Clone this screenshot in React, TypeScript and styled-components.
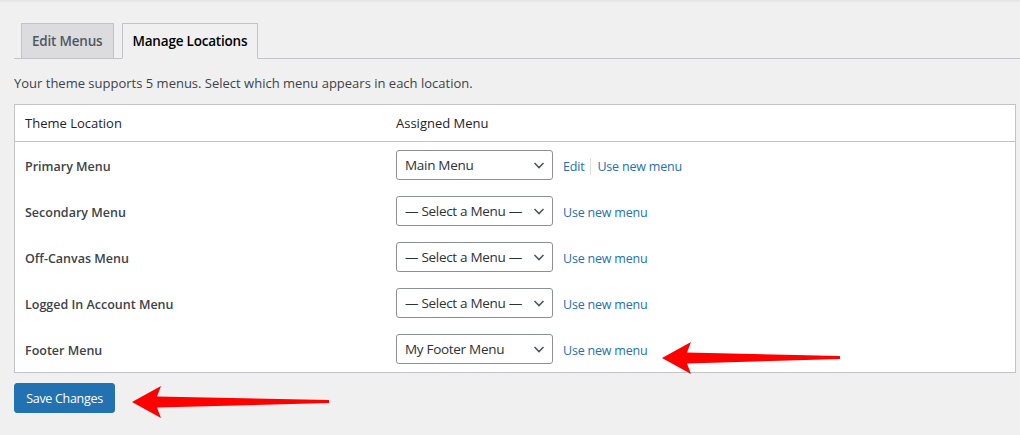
import styled, { createGlobalStyle } from "styled-components";

const GlobalStyle = createGlobalStyle`
  html, body {
    margin: 0;
    padding: 0;
    background: #f0f0f1;
    font-family: "Open Sans", "Noto Sans", sans-serif;
    color: #3c434a;
  }
`;

const Page = styled.div`
  position: relative;
  width: 1020px;
  height: 435px;
  overflow: hidden;
  background: #f0f0f1;
`;

const TopShadow = styled.div`
  height: 3px;
  background: linear-gradient(#e2e2e3, #f0f0f1);
`;

const Wrap = styled.div`
  padding: 20px 0 0 14px;
`;

const TabBar = styled.div`
  display: flex;
  gap: 8px;
  padding-left: 7px;
  border-bottom: 1px solid #c3c4c7;
  height: 35px;
`;

const Tab = styled.div<{ $active?: boolean }>`
  box-sizing: border-box;
  height: ${(p) => (p.$active ? "36px" : "35px")};
  padding: 0 10px;
  border: 1px solid #c3c4c7;
  border-bottom: ${(p) => (p.$active ? "1px solid #f0f0f1" : "none")};
  background: ${(p) => (p.$active ? "#f0f0f1" : "#dcdcde")};
  color: ${(p) => (p.$active ? "#000" : "#50575e")};
  font-size: 13.5px;
  font-weight: 600;
  display: flex;
  align-items: center;
  letter-spacing: -0.2px;
`;

const Intro = styled.p`
  margin: 15px 0 0;
  font-size: 13px;
  line-height: 18px;
  color: #3c434a;
`;

const Table = styled.div`
  margin-top: 12px;
  width: 1002px;
  box-sizing: border-box;
  border: 1px solid #c3c4c7;
  background: #fff;
`;

const Row = styled.div<{ $head?: boolean }>`
  display: grid;
  grid-template-columns: 371px 1fr;
  align-items: center;
  height: ${(p) => (p.$head ? "37px" : "46px")};
  border-bottom: ${(p) => (p.$head ? "1px solid #c3c4c7" : "none")};
  box-sizing: border-box;
  padding-left: 10px;
`;

const HeadCell = styled.div`
  font-size: 13px;
  color: #1d2327;
`;

const Label = styled.div`
  font-size: 12.5px;
  font-weight: 600;
  color: #3c434a;
  padding-top: 2px;
`;

const Assign = styled.div`
  display: flex;
  align-items: center;
`;

const Select = styled.div`
  box-sizing: border-box;
  width: 157px;
  height: 30px;
  border: 1px solid #8c8f94;
  border-radius: 3px;
  display: flex;
  align-items: center;
  justify-content: space-between;
  padding: 0 6px 0 8px;
  font-size: 13.5px;
  color: #2c3338;
  letter-spacing: -0.3px;
  white-space: nowrap;
  overflow: hidden;
`;

const Links = styled.div`
  display: flex;
  align-items: center;
  margin-left: 10px;
  font-size: 12.5px;
  letter-spacing: -0.2px;
  padding-top: 2px;
`;

const Link = styled.a`
  color: #2271b1;
  text-decoration: none;
`;

const Sep = styled.span`
  display: inline-block;
  width: 1px;
  height: 17px;
  background: #dcdcde;
  margin: 0 6px;
`;

const SaveButton = styled.button`
  margin-top: 10px;
  height: 30px;
  width: 101px;
  background: #2271b1;
  border: 1px solid #2271b1;
  border-radius: 3px;
  color: #fff;
  font-family: "Open Sans", "Noto Sans", sans-serif;
  font-size: 12.5px;
  letter-spacing: -0.3px;
  padding: 0;
`;

const Arrow = styled.svg`
  position: absolute;
  overflow: visible;
`;

function Chevron() {
  return (
    <svg width="14" height="14" viewBox="0 0 14 14">
      <path d="M2.5 5l4.5 4.5L11.5 5" fill="none" stroke="#50575e" strokeWidth="1.6" />
    </svg>
  );
}

function RedArrow({ left, top, length }: { left: number; top: number; length: number }) {
  return (
    <Arrow style={{ left, top }} width={length} height={32} viewBox={`0 0 ${length} 32`}>
      <path
        d={`M0 16 L29 0 L25 10.5 L${length} 14 L${length} 17 L25 21.5 L29 32 Z`}
        fill="#ff0000"
      />
    </Arrow>
  );
}

const rows = [
  { label: "Primary Menu", value: "Main Menu", edit: true },
  { label: "Secondary Menu", value: "— Select a Menu —" },
  { label: "Off-Canvas Menu", value: "— Select a Menu —" },
  { label: "Logged In Account Menu", value: "— Select a Menu —" },
  { label: "Footer Menu", value: "My Footer Menu" },
];

export default function App() {
  return (
    <Page>
      <GlobalStyle />
      <TopShadow />
      <Wrap>
        <TabBar>
          <Tab>Edit Menus</Tab>
          <Tab $active>Manage Locations</Tab>
        </TabBar>
        <Intro>Your theme supports 5 menus. Select which menu appears in each location.</Intro>
        <Table>
          <Row $head>
            <HeadCell>Theme Location</HeadCell>
            <HeadCell>Assigned Menu</HeadCell>
          </Row>
          {rows.map((r) => (
            <Row key={r.label}>
              <Label>{r.label}</Label>
              <Assign>
                <Select>
                  <span>{r.value}</span>
                  <Chevron />
                </Select>
                <Links>
                  {r.edit && (
                    <>
                      <Link href="#">Edit</Link>
                      <Sep />
                    </>
                  )}
                  <Link href="#">Use new menu</Link>
                </Links>
              </Assign>
            </Row>
          ))}
        </Table>
        <SaveButton>Save Changes</SaveButton>
      </Wrap>
      <RedArrow left={662} top={342} length={178} />
      <RedArrow left={132} top={386} length={197} />
    </Page>
  );
}
